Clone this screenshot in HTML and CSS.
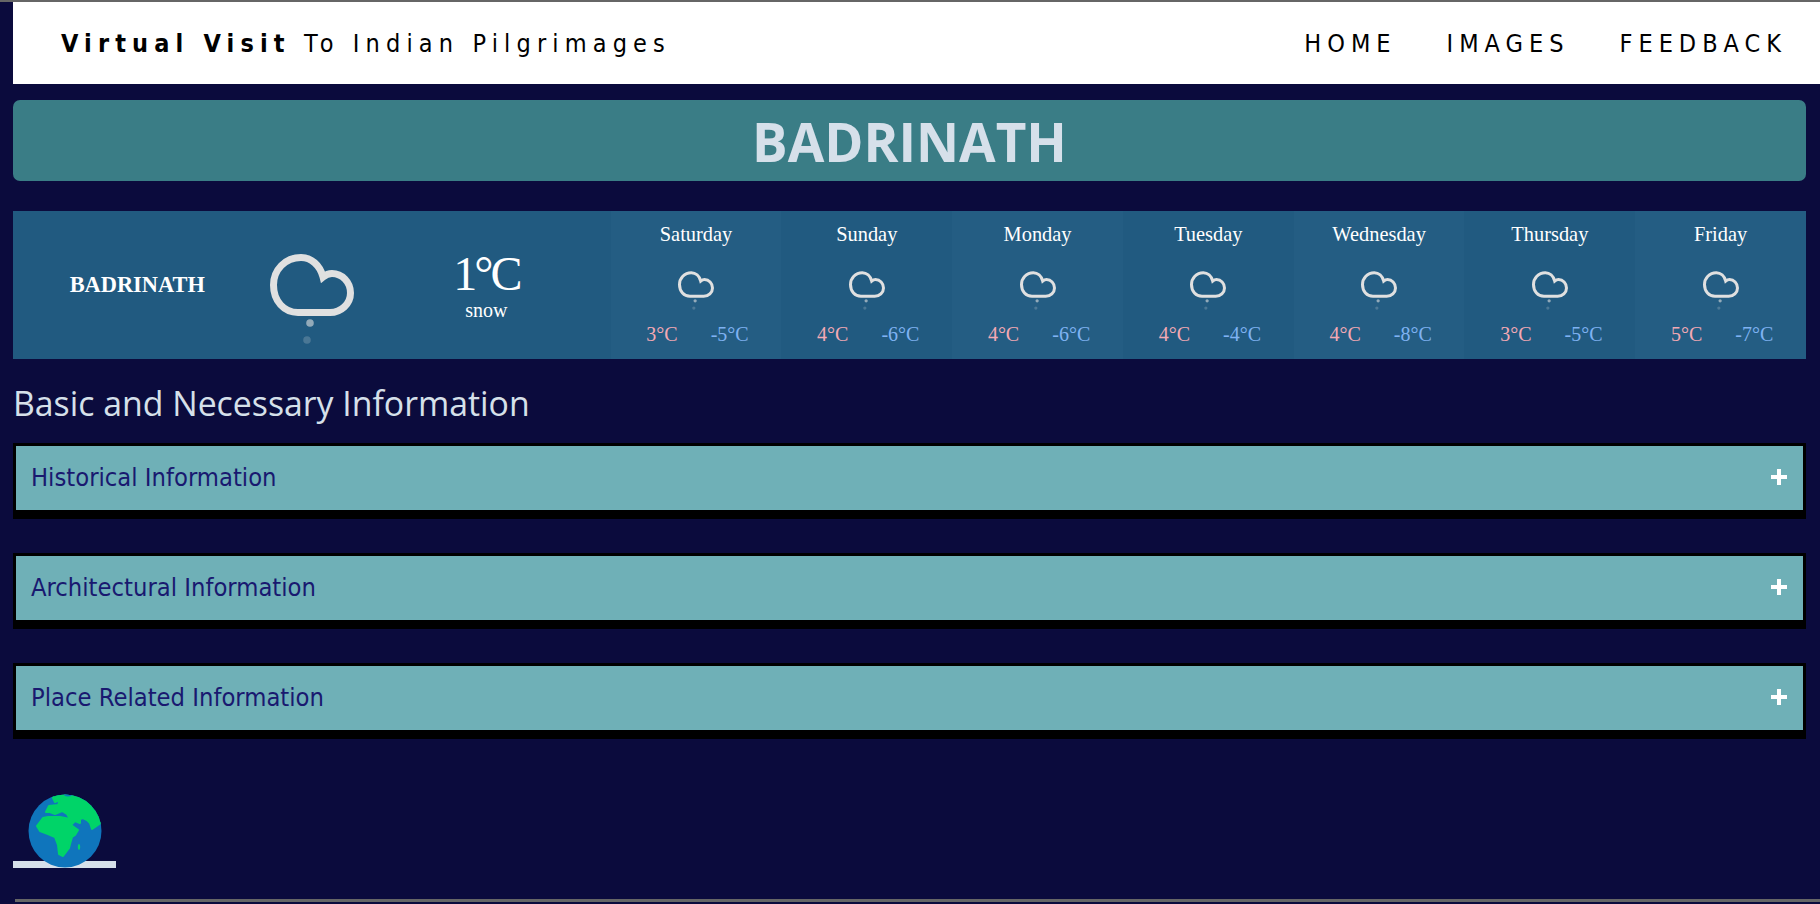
FILE: index.html
```html
<!DOCTYPE html>
<html lang="en">
<head>
  <meta charset="UTF-8" />
  <title>Badrinath</title>
  <link rel="stylesheet" href="styles.css">
</head>
<body>
  <svg class="icon-defs" width="0" height="0">
    <symbol id="cloud" viewBox="0 0 84 90">
      <path d="M28 58.500 H60 C71 58.500 80.500 50 80.500 39 C80.500 28 72 19.500 62 19.500 C59 19.500 56 20.500 53 23 C50 11 41 3.500 31 3.500 C15 3.500 3.500 16 3.500 31 C3.500 47 14 58.500 28 58.500 Z" fill="none" stroke="#e0e0e0" stroke-width="7" />
      <circle cx="40" cy="69" r="3.800" fill="#e0e0e0" opacity="0.6" />
      <circle cx="37" cy="86" r="3.800" fill="#e0e0e0" opacity="0.22" />
    </symbol>
    <clipPath id="globe-clip">
      <circle cx="37" cy="37" r="36.500" />
    </clipPath>
  </svg>

  <div class="topline"></div>

  <div class="page">
    <nav class="navbar">
      <div class="brand"><b>Virtual Visit</b> To Indian Pilgrimages</div>
      <div class="links">
        <a href="#">HOME</a>
        <a href="#">IMAGES</a>
        <a href="#">FEEDBACK</a>
      </div>
    </nav>

    <h1 class="banner">BADRINATH</h1>

    <section class="weather">
      <div class="today">
        <div class="city">BADRINATH</div>
        <div class="today-icon"><svg width="84" height="90"><use href="#cloud" /></svg></div>
        <div class="today-temp">
          <div class="deg">1°C</div>
          <div class="desc">snow</div>
        </div>
      </div>
      <div class="days">
        <div class="day"><div class="name">Saturday</div><svg class="day-icon" width="36" height="39"><use href="#cloud" /></svg><div class="range"><span class="hi">3°C</span><span class="lo">-5°C</span></div></div>
        <div class="day"><div class="name">Sunday</div><svg class="day-icon" width="36" height="39"><use href="#cloud" /></svg><div class="range"><span class="hi">4°C</span><span class="lo">-6°C</span></div></div>
        <div class="day"><div class="name">Monday</div><svg class="day-icon" width="36" height="39"><use href="#cloud" /></svg><div class="range"><span class="hi">4°C</span><span class="lo">-6°C</span></div></div>
        <div class="day"><div class="name">Tuesday</div><svg class="day-icon" width="36" height="39"><use href="#cloud" /></svg><div class="range"><span class="hi">4°C</span><span class="lo">-4°C</span></div></div>
        <div class="day"><div class="name">Wednesday</div><svg class="day-icon" width="36" height="39"><use href="#cloud" /></svg><div class="range"><span class="hi">4°C</span><span class="lo">-8°C</span></div></div>
        <div class="day"><div class="name">Thursday</div><svg class="day-icon" width="36" height="39"><use href="#cloud" /></svg><div class="range"><span class="hi">3°C</span><span class="lo">-5°C</span></div></div>
        <div class="day"><div class="name">Friday</div><svg class="day-icon" width="36" height="39"><use href="#cloud" /></svg><div class="range"><span class="hi">5°C</span><span class="lo">-7°C</span></div></div>
      </div>
    </section>

    <h2 class="info-title">Basic and Necessary Information</h2>

    <div class="accordion">
      <div class="acc-item"><span>Historical Information</span><span class="plus"></span></div>
      <div class="acc-item"><span>Architectural Information</span><span class="plus"></span></div>
      <div class="acc-item"><span>Place Related Information</span><span class="plus"></span></div>
    </div>

    <div class="globe-wrap">
      <div class="globe-bar"></div>
      <svg class="globe" width="74" height="74" viewBox="0 0 74 74">
        <circle cx="37" cy="37" r="36.500" fill="#0f75bc" />
        <g clip-path="url(#globe-clip)">
          <path d="M25 4 L25 1 L36 -2 L44 -2 L60 4 L68 14 L74 28 L67 33 L64 35 L62 29 L59 26 L55 24 L52 25 L52 29 L47 27 L43 31 L50 36 L47 41 L44 43 L42 50 L41 54 L35 62 L31 60 L30 51 L27 43 L20 40 L12 37 L9 32 L15 24 L20 23 L32 23 L42 25 L39 20 L34 17 L27 20 L22 18 L18 18 L21 12 L30 11 L32 6 L27 8 Z" fill="#00d468" stroke="#00d468" stroke-width="2" stroke-linejoin="round" />
          <ellipse cx="51" cy="53" rx="1.200" ry="3" fill="#00d468" />
          <ellipse cx="40" cy="0" rx="4" ry="2.500" fill="#0f75bc" />
        </g>
      </svg>
    </div>
  </div>

  <div class="bottomline"></div>
</body>
</html>
```

FILE: styles.css
```css
* {
  box-sizing: border-box;
}

html, body {
  margin: 0;
  padding: 0;
  height: 100%;
  overflow: hidden;
  background: #0b0b3d;
}

body {
  position: relative;
}

.icon-defs {
  position: absolute;
}

.topline {
  height: 2px;
  background: #666;
}

.bottomline {
  position: absolute;
  left: 15px;
  right: 0;
  bottom: 2px;
  height: 3px;
  background: #666;
}

.page {
  padding-left: 13px;
}

.navbar {
  height: 82px;
  background: white;
  display: flex;
  align-items: center;
  justify-content: space-between;
  padding: 0 33px 0 48px;
  color: #000;
}

.brand {
  font-family: "DejaVu Sans", sans-serif;
  font-stretch: condensed;
  font-size: 25px;
  letter-spacing: 6.150px;
}

.links {
  display: flex;
  gap: 50px;
  font-family: "DejaVu Sans", sans-serif;
  font-stretch: condensed;
  font-size: 25px;
  letter-spacing: 6px;
}

.links a {
  color: #000;
  text-decoration: none;
}

.banner {
  margin: 16px 14px 0 0;
  height: 81px;
  line-height: 83px;
  background: #3a7d86;
  border-radius: 7px;
  text-align: center;
  color: #d6e0ea;
  font-family: "Open Sans", sans-serif;
  font-size: 53px;
  font-weight: 700;
}

.weather {
  margin: 30px 14px 0 0;
  height: 148px;
  display: grid;
  grid-template-columns: 1fr 2fr;
  background: #215a80;
  color: white;
  font-family: "Liberation Serif", serif;
}

.today {
  display: grid;
  grid-template-columns: 1fr 1fr 1fr;
  align-items: center;
  padding: 0 37px;
  text-align: center;
}

.city {
  font-size: 22.400px;
  font-weight: 700;
}

.today-icon {
  align-self: start;
  padding-top: 43px;
}

.deg {
  font-size: 48px;
  line-height: 48px;
  letter-spacing: -3px;
}

.desc {
  margin-top: 1px;
  font-size: 20px;
  line-height: 22px;
}

.days {
  display: grid;
  grid-template-columns: repeat(7, 1fr);
}

.day {
  display: flex;
  flex-direction: column;
  align-items: center;
  padding-top: 11px;
  background: #245d83;
}

.day:nth-child(even) {
  background: #215a80;
}

.name {
  font-size: 20.400px;
  line-height: 24px;
}

.day-icon {
  margin-top: 25px;
}

.range {
  display: flex;
  gap: 33px;
  margin-top: 12px;
  padding-left: 3px;
  font-size: 20px;
  line-height: 24px;
}

.hi {
  color: #f4a9b4;
}

.lo {
  color: #7fb2f2;
}

.info-title {
  margin: 21px 0 17px;
  color: #d6e0ea;
  font-family: "Open Sans", sans-serif;
  font-size: 33.800px;
  font-weight: 400;
  line-height: 46px;
}

.accordion {
  margin-right: 14px;
  display: flex;
  flex-direction: column;
  gap: 40px;
}

.acc-item {
  height: 70px;
  padding: 0 16px 2px 15px;
  display: flex;
  align-items: center;
  justify-content: space-between;
  background: #6fb0b7;
  border: 3px solid black;
  box-shadow: 0 6px 0 black;
  color: #191970;
  font-family: "DejaVu Sans", sans-serif;
  font-stretch: condensed;
  font-size: 25.300px;
}

.plus {
  width: 16px;
  height: 16px;
  background:
    linear-gradient(white, white) center / 16px 4px no-repeat,
    linear-gradient(white, white) center / 4px 16px no-repeat;
}

.globe-wrap {
  position: relative;
  width: 103px;
  height: 74px;
  margin-top: 61px;
}

.globe-bar {
  position: absolute;
  left: 0;
  right: 0;
  bottom: 0;
  height: 7px;
  background: #d6e0ea;
}

.globe {
  position: absolute;
  left: 15px;
  top: 0;
}
```
